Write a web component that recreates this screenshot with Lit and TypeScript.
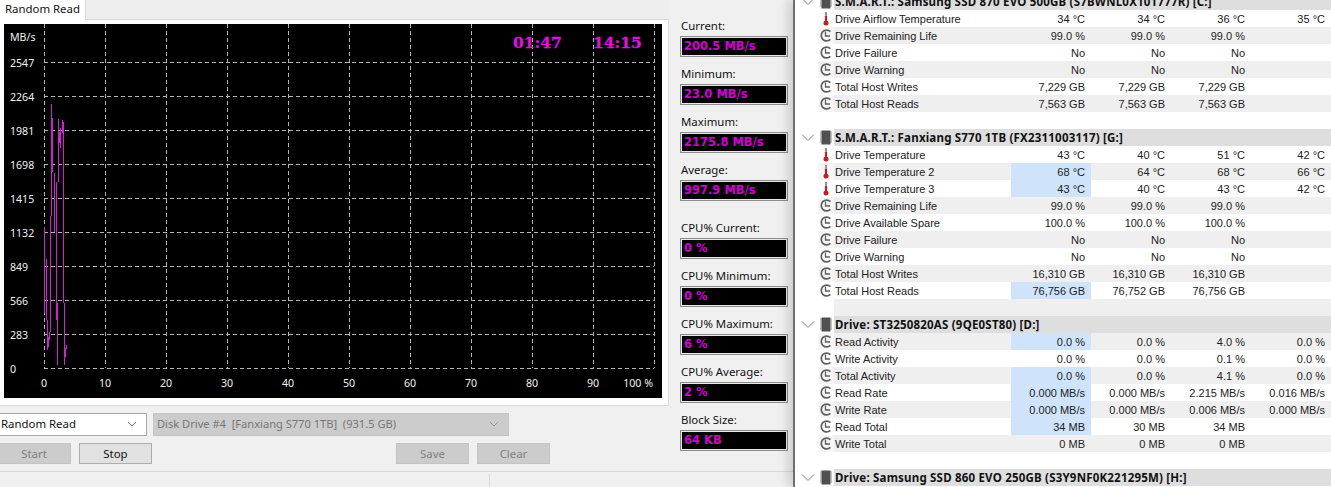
import { LitElement, html, css, svg } from "lit";
import { customElement } from "lit/decorators.js";

type Row = { icon: "t" | "c"; label: string; vals: string[]; hi?: boolean };
type Item = { head: string } | Row | { blank: true };

const r3 = (icon: "t" | "c", label: string, v: string, hi = false): Row => ({ icon, label, vals: [v, v, v], hi });

const items: Item[] = [
  { head: "S.M.A.R.T.: Samsung SSD 870 EVO 500GB (S7BWNL0X101777R) [C:]" },
  { icon: "t", label: "Drive Airflow Temperature", vals: ["34 °C", "34 °C", "36 °C", "35 °C"] },
  r3("c", "Drive Remaining Life", "99.0 %"),
  r3("c", "Drive Failure", "No"),
  r3("c", "Drive Warning", "No"),
  r3("c", "Total Host Writes", "7,229 GB"),
  r3("c", "Total Host Reads", "7,563 GB"),
  { blank: true },
  { head: "S.M.A.R.T.: Fanxiang S770 1TB (FX2311003117) [G:]" },
  { icon: "t", label: "Drive Temperature", vals: ["43 °C", "40 °C", "51 °C", "42 °C"] },
  { icon: "t", label: "Drive Temperature 2", vals: ["68 °C", "64 °C", "68 °C", "66 °C"], hi: true },
  { icon: "t", label: "Drive Temperature 3", vals: ["43 °C", "40 °C", "43 °C", "42 °C"], hi: true },
  r3("c", "Drive Remaining Life", "99.0 %"),
  r3("c", "Drive Available Spare", "100.0 %"),
  r3("c", "Drive Failure", "No"),
  r3("c", "Drive Warning", "No"),
  r3("c", "Total Host Writes", "16,310 GB"),
  { icon: "c", label: "Total Host Reads", vals: ["76,756 GB", "76,752 GB", "76,756 GB"], hi: true },
  { blank: true },
  { head: "Drive: ST3250820AS (9QE0ST80) [D:]" },
  { icon: "c", label: "Read Activity", vals: ["0.0 %", "0.0 %", "4.0 %", "0.0 %"], hi: true },
  { icon: "c", label: "Write Activity", vals: ["0.0 %", "0.0 %", "0.1 %", "0.0 %"] },
  { icon: "c", label: "Total Activity", vals: ["0.0 %", "0.0 %", "4.1 %", "0.0 %"], hi: true },
  { icon: "c", label: "Read Rate", vals: ["0.000 MB/s", "0.000 MB/s", "2.215 MB/s", "0.016 MB/s"], hi: true },
  { icon: "c", label: "Write Rate", vals: ["0.000 MB/s", "0.000 MB/s", "0.006 MB/s", "0.000 MB/s"], hi: true },
  { icon: "c", label: "Read Total", vals: ["34 MB", "30 MB", "34 MB"], hi: true },
  { icon: "c", label: "Write Total", vals: ["0 MB", "0 MB", "0 MB"] },
  { blank: true },
  { head: "Drive: Samsung SSD 860 EVO 250GB (S3Y9NF0K221295M) [H:]" },
];

const stats = [
  [["Current:", "200.5 MB/s"], ["Minimum:", "23.0 MB/s"], ["Maximum:", "2175.8 MB/s"], ["Average:", "997.9 MB/s"]],
  [["CPU% Current:", "0 %"], ["CPU% Minimum:", "0 %"], ["CPU% Maximum:", "6 %"], ["CPU% Average:", "2 %"], ["Block Size:", "64 KB"]],
];

const yTicks = [2547, 2264, 1981, 1698, 1415, 1132, 849, 566, 283];
const xTicks = [0, 10, 20, 30, 40, 50, 60, 70, 80, 90];
const trace: [number, number, number][] = [
  [44.5, 227, 313], [46.5, 259, 320], [47.5, 320, 350], [48.5, 337, 347], [49.5, 332, 340],
  [50.5, 216, 332], [51.5, 104, 216], [52.5, 118, 172], [54.5, 173, 232], [56.5, 182, 320], [57.5, 303, 365],
  [58.5, 119, 182], [59.5, 132, 143], [60.5, 128, 148], [62.5, 120, 133], [63.5, 122, 303],
  [64.5, 303, 365], [65.5, 348, 357], [66.5, 345, 349],
];

const thermo = html`<svg class="ic" viewBox="0 0 16 17"><path d="M8 2v8" stroke="#a08080" stroke-width="1.8"/><path d="M8 6v6" stroke="#c02020" stroke-width="2.2"/><circle cx="8" cy="13" r="2.5" fill="#c41f1f"/></svg>`;
const clock = html`<svg class="ic" viewBox="0 0 16 17"><path d="M12.4 4.6A5.4 5.4 0 1 0 12.4 12.4" fill="none" stroke="#5e5e5e" stroke-width="1.7"/><path d="M7.5 4.5V9H12" fill="none" stroke="#5e5e5e" stroke-width="1.3"/></svg>`;
const chip = html`<svg class="ic" viewBox="0 0 16 17"><rect x="3.5" y="1.5" width="9" height="14" fill="#505050"/><path d="M2 3h12M2 5h12M2 7h12M2 9h12M2 11h12M2 13h12" stroke="#888" stroke-width="1" stroke-dasharray="2 8"/></svg>`;
const chevron = html`<svg class="chev" viewBox="0 0 23 17"><path d="M7 5.5l6 6 6-6" fill="none" stroke="#808080" stroke-width="1"/></svg>`;
const caret = html`<svg class="caret" viewBox="0 0 10 6"><path d="M1 1l4 4 4-4" fill="none" stroke="currentColor" stroke-width="1"/></svg>`;

@customElement("app-root")
export class AppRoot extends LitElement {
  static styles = css`
    :host { display: block; width: 1331px; height: 487px; overflow: hidden; background: #f0f0f0; font-family: "Noto Sans", sans-serif; color: #111; }
    .app { display: flex; width: 1331px; height: 487px; overflow: hidden; }
    .left { width: 793px; flex: none; display: flex; flex-direction: column; }
    .top { height: 471px; flex: none; display: flex; }
    .main { width: 669px; flex: none; }
    .strip { height: 19px; background: #eeeeee; border-bottom: 1px solid #d9d9d9; }
    .tab { width: 86px; height: 20px; background: #fff; border-right: 1px solid #d9d9d9; box-sizing: border-box; padding-left: 5px; font-size: 11.4px; line-height: 17px; }
    .page { background: #fff; border-right: 1px solid #d9d9d9; border-bottom: 1px solid #d9d9d9; padding: 4px 6px 7px 4px; }
    .chart { display: block; width: 658px; height: 374px; background: #000; }
    .chart text { font-family: "Noto Sans", sans-serif; font-size: 10.6px; fill: #f0f0f0; }
    .chart text.time { font-family: "DejaVu Serif", serif; font-weight: 700; font-size: 15.5px; fill: #e010e0; stroke: #e010e0; stroke-width: 0.3px; }
    .controls { display: flex; flex-direction: column; gap: 7px; padding-top: 7px; margin-left: -3px; }
    .line { display: flex; gap: 6px; }
    .sel { height: 23px; box-sizing: border-box; border: 1px solid #a8a8a8; background: #fff; display: flex; align-items: center; justify-content: space-between; font-size: 11.4px; padding: 0 9px 2px 3px; }
    .sel.a { width: 150px; color: #111; }
    .sel.b { width: 356px; background: #cccccc; border-color: #c4c4c4; color: #777; padding-left: 3px; white-space: pre; font-size: 11.1px; }
    .caret { width: 10px; height: 6px; color: #666; }
    .sel.b .caret { color: #999; }
    .btn { width: 73px; height: 21px; box-sizing: border-box; border: 1px solid #adadad; background: #e1e1e1; font-size: 11.4px; display: flex; align-items: center; justify-content: center; }
    .btn.off { background: #cccccc; border-color: #c4c4c4; color: #808080; }
    .btn.start { width: 74px; }
    .btn.save { margin-left: 236px; }
    .buttons { display: flex; gap: 8px; }
    .stats { padding: 18px 0 0 11px; display: flex; flex-direction: column; gap: 19px; }
    .group { display: flex; flex-direction: column; gap: 9px; }
    .stat { display: flex; flex-direction: column; }
    .lab { font-size: 11.4px; height: 18px; line-height: 16px; padding-left: 1px; }
    .box { width: 108px; height: 21px; box-sizing: border-box; background: #000; border: 1px solid #8c8c8c; box-shadow: inset 0 0 0 1px #e8e8e8; padding-left: 3px; font-family: "DejaVu Sans", sans-serif; font-weight: 700; font-size: 11.5px; line-height: 19px; color: #d400d4; }
    .status { flex: 1; border-top: 1px solid #d9d9d9; display: flex; padding-top: 2px; }
    .status i { display: block; width: 1px; margin-left: 489px; background: #d9d9d9; }
    .right { flex: 1; background: #fff; border-left: 2px solid #6e6e6e; box-shadow: -6px 0 9px rgba(0,0,0,.13); position: relative; overflow: hidden; font-family: "Liberation Sans", sans-serif; font-size: 11px; }
    .list { margin-top: -7px; }
    .row, .blank, .head { height: 17px; display: flex; color: #222; line-height: 19px; }
    .row { margin-left: 23px; }
    .ic { width: 16px; height: 17px; flex: none; display: block; }
    .row .cell0 { width: 16px; flex: none; }
    .row.odd { background: #efefef; }
    .row.odd .cell0 { background: #f6f6f6; }
    .name { width: 177px; flex: none; padding-left: 1px; box-sizing: border-box; white-space: nowrap; }
    .val { width: 80px; flex: none; box-sizing: border-box; text-align: right; padding-right: 6px; white-space: nowrap; }
    .val.hi { background: #cfe4fb; }
    .blank { margin-left: 39px; }
    .blank.odd { background: #efefef; }
    .chev { width: 23px; height: 17px; flex: none; display: block; }
    .title { flex: 1; background: #dedede; font-weight: 700; color: #111; padding-left: 1px; white-space: nowrap; font-family: "Noto Sans", sans-serif; font-size: 11.5px; letter-spacing: 0.2px; line-height: 17px; }
  `;

  private chart() {
    const ys = [62, 96, 130, 164, 198, 232, 266, 300, 334, 368];
    const xs = [44, 105, 166, 227, 288, 349, 410, 471, 532, 593, 654];
    return html`<svg class="chart" viewBox="4 24 658 374">
      ${xs.map((x) => svg`<line x1=${x + 0.5} x2=${x + 0.5} y1="24" y2="368" stroke="#b4b4b4" stroke-dasharray="4 3" shape-rendering="crispEdges"/>`)}
      ${ys.map((y) => svg`<line x1="44" x2="654" y1=${y + 0.5} y2=${y + 0.5} stroke="#b4b4b4" stroke-dasharray="4 3" shape-rendering="crispEdges"/>`)}
      ${trace.map(([x, a, b]) => svg`<line x1=${x} x2=${x} y1=${a} y2=${b} stroke="#d420d4" stroke-width="1" shape-rendering="crispEdges"/>`)}
      <text x="10" y="41">MB/s</text>
      ${yTicks.map((t, i) => svg`<text x="10" y=${ys[i] + 5}>${t}</text>`)}
      <text x="10" y="373">0</text>
      ${xTicks.map((t, i) => svg`<text x=${xs[i]} y="387" text-anchor="middle">${t}</text>`)}
      <text x="653" y="387" text-anchor="end">100 %</text>
      <text class="time" x="513" y="48">01:47</text>
      <text class="time" x="593" y="48">14:15</text>
    </svg>`;
  }

  private renderItem(it: Item, i: number) {
    const odd = i % 2 === 0;
    if ("head" in it) return html`<div class="head">${chevron}${chip}<div class="title">${it.head}</div></div>`;
    if ("blank" in it) return html`<div class="blank ${odd ? "odd" : ""}"></div>`;
    return html`<div class="row ${odd ? "odd" : ""}">
      <div class="cell0">${it.icon === "t" ? thermo : clock}</div>
      <div class="name">${it.label}</div>
      ${[0, 1, 2, 3].map((k) => html`<div class="val ${k === 0 && it.hi ? "hi" : ""}">${it.vals[k] ?? ""}</div>`)}
    </div>`;
  }

  render() {
    return html`<div class="app">
      <div class="left">
        <div class="top">
          <div class="main">
            <div class="strip"><div class="tab">Random Read</div></div>
            <div class="page">${this.chart()}</div>
            <div class="controls">
              <div class="line">
                <div class="sel a">Random Read ${caret}</div>
                <div class="sel b">Disk Drive #4  [Fanxiang S770 1TB]  (931.5 GB) ${caret}</div>
              </div>
              <div class="buttons">
                <div class="btn off start">Start</div>
                <div class="btn">Stop</div>
                <div class="btn off save">Save</div>
                <div class="btn off">Clear</div>
              </div>
            </div>
          </div>
          <div class="stats">
            ${stats.map((g) => html`<div class="group">
              ${g.map(([l, v]) => html`<div class="stat"><div class="lab">${l}</div><div class="box">${v}</div></div>`)}
            </div>`)}
          </div>
        </div>
        <div class="status"><i></i></div>
      </div>
      <div class="right"><div class="list">${items.map((it, i) => this.renderItem(it, i))}</div></div>
    </div>`;
  }
}
